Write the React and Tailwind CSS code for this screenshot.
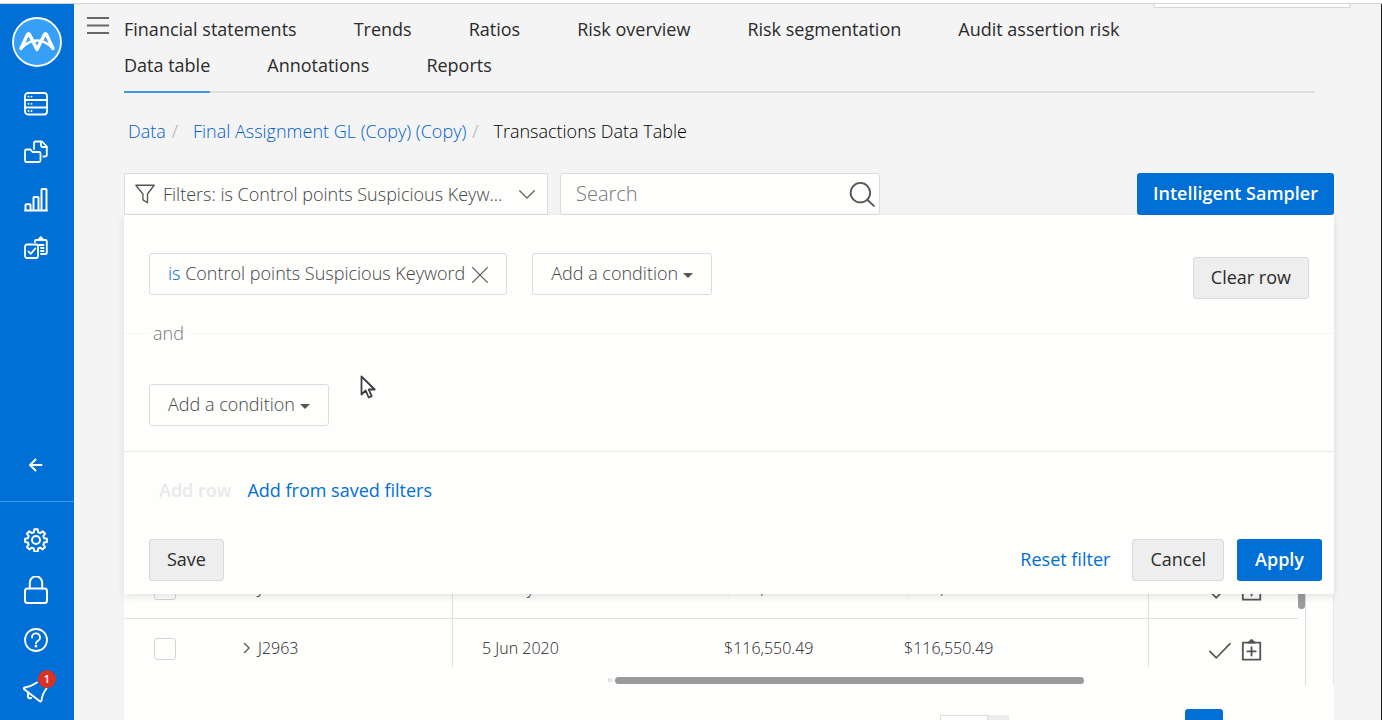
import clsx from 'clsx';

const TABS = [
  'Financial statements',
  'Trends',
  'Ratios',
  'Risk overview',
  'Risk segmentation',
  'Audit assertion risk',
  'Data table',
  'Annotations',
  'Reports',
];

const ROWS = [
  { id: 'J2962', date: '29 May 2020', debit: '$116,550.49', credit: '$116,550.49' },
  { id: 'J2963', date: '5 Jun 2020', debit: '$116,550.49', credit: '$116,550.49' },
];

function Icon({ children, className = 'size-6', strokeWidth = 1.8 }) {
  return (
    <svg
      viewBox="0 0 24 24"
      className={clsx('shrink-0', className)}
      fill="none"
      stroke="currentColor"
      strokeWidth={strokeWidth}
      strokeLinecap="round"
      strokeLinejoin="round"
      aria-hidden="true"
    >
      {children}
    </svg>
  );
}

function Logo() {
  return (
    <svg viewBox="0 0 50 50" className="size-[50px]" aria-hidden="true">
      <circle cx="25" cy="25" r="24" fill="#36a0f8" stroke="#fff" strokeWidth="1.8" />
      <path
        d="M9 31.5 15.5 17.500q1-1.500 2 0L25 32.500 32.500 17.500q1-1.500 2 0L41 31.500"
        fill="none"
        stroke="#fff"
        strokeWidth="3.4"
        strokeLinecap="round"
        strokeLinejoin="round"
      />
      <path d="M9.500 31Q17 23.500 25 23.500T40.500 31" fill="none" stroke="#fff" strokeWidth="2.6" />
    </svg>
  );
}

function ServerIcon() {
  return (
    <Icon>
      <rect x="1" y="1" width="22" height="21.5" rx="3" />
      <path d="M1 8h22M1 15.500h22" />
      <path d="M4.500 4.600h.1M7.500 4.600h.1M4.500 11.800h.1M7.500 11.800h.1M4.500 19h.1M7.500 19h.1" />
    </Icon>
  );
}

function FilesIcon() {
  return (
    <Icon>
      <path d="M1 20.500V11q0-1.500 1.500-1.500h4l2 2.500H15q1.500 0 1.500 1.500v7q0 1.500-1.500 1.500H2.500Q1 22 1 20.500Z" />
      <path d="M10 9V3q0-1.500 1.500-1.500h6.500l4.800 5V15q0 1.500-1.500 1.500h-2" />
      <path d="M17 2v3.500Q17 7 18.500 7h4" />
    </Icon>
  );
}

function BarsIcon() {
  return (
    <Icon strokeWidth={2}>
      <path d="M1 22.500h22M1.500 22V17q0-.800.800-.800h3.400q.800 0 .800.800v5M9.500 22V9.800q0-.800.800-.800h3.400q.800 0 .800.800V22M17.500 22V1.800q0-.800.800-.800h3.400q.800 0 .800.800V22" />
    </Icon>
  );
}

function TasksIcon() {
  return (
    <Icon>
      <rect x="1" y="8.500" width="13" height="13.500" rx="2" />
      <path d="m4.500 15.500 2.200 2.300 4.600-5.300M11 6V5q0-1 1-1h9.500q1.300 0 1.300 1.300v11.400q0 1.300-1.300 1.300H17M15 9h4.500M17 12h2.500M17 15h2.500" />
      <path d="M14 4 16.800 1 19.500 4Z" fill="currentColor" />
    </Icon>
  );
}

function GearIcon() {
  return (
    <Icon strokeWidth={2}>
      <circle cx="12" cy="12" r="4" />
      <path d="M9.800 4.300 10.300 1.300h3.400l.5 3 2 .800 2.500-1.800 2.400 2.400L19.300 8.200l.8 2 2.800.5v3.400l-2.800.5-.8 2 1.800 2.400-2.400 2.400-2.500-1.700-2 .800-.5 3h-3.400l-.5-3-2-.800-2.500 1.700L2.900 19l1.800-2.400-.8-2-2.800-.5v-3.400l2.800-.5.8-2L2.900 5.700l2.400-2.400 2.500 1.800Z" />
    </Icon>
  );
}

function LockIcon() {
  return (
    <Icon className="h-7 w-6" strokeWidth={2}>
      <rect x="1" y="10.500" width="22" height="14.500" rx="2.500" />
      <path d="M5.800 10.500V5a6.200 6.700 0 0 1 12.400 0v5.500" />
    </Icon>
  );
}

function HelpIcon() {
  return (
    <Icon>
      <circle cx="12" cy="12" r="11" />
      <path d="M8 9.500a4 4 0 1 1 6 3.300q-2 1.200-2 2.700" />
      <circle cx="12" cy="18.200" r=".5" fill="currentColor" />
    </Icon>
  );
}

function MegaphoneIcon() {
  return (
    <svg
      viewBox="0 0 28 28"
      className="-ml-0.5 size-7 shrink-0"
      fill="none"
      stroke="currentColor"
      strokeWidth="2"
      strokeLinecap="round"
      strokeLinejoin="round"
      aria-hidden="true"
    >
      <path d="M15 6.500Q9 10.500 3 11.500q-2 .5-.5 2L17.500 25q1.500 1 2-.5.5-6 5-12" />
      <path d="M6 17.500v4q1.500 1 3 .5" />
    </svg>
  );
}

function SideButton({ label, children }) {
  return (
    <button type="button" aria-label={label} className="relative flex size-6 items-center">
      {children}
    </button>
  );
}

function Sidebar() {
  return (
    <aside className="flex w-[74px] shrink-0 flex-col bg-[#006fd6] text-white">
      <a href="#home" aria-label="Home" className="mt-[13px] self-center">
        <Logo />
      </a>
      <nav className="mt-[25px] flex flex-col gap-6 pl-6">
        <SideButton label="Data sources"><ServerIcon /></SideButton>
        <SideButton label="Files"><FilesIcon /></SideButton>
        <SideButton label="Reports"><BarsIcon /></SideButton>
        <SideButton label="Tasks"><TasksIcon /></SideButton>
      </nav>
      <div className="mt-auto pb-6 pl-6">
        <SideButton label="Collapse">
          <Icon strokeWidth={2}>
            <path d="M17.500 12H6.500M11.500 6.500 6 12l5.500 5.500" />
          </Icon>
        </SideButton>
      </div>
      <div className="flex flex-col gap-[26px] border-t border-[#3a9bee] pt-[26px] pb-[18px] pl-6">
        <SideButton label="Settings"><GearIcon /></SideButton>
        <SideButton label="Security"><LockIcon /></SideButton>
        <SideButton label="Help"><HelpIcon /></SideButton>
        <SideButton label="Notifications">
          <MegaphoneIcon />
          <span className="absolute -top-2 left-[14px] flex size-[18px] items-center justify-center rounded-full bg-[#da3125] text-[11px] font-semibold">
            1
          </span>
        </SideButton>
      </div>
    </aside>
  );
}

function Tabs({ active }) {
  return (
    <nav className="mr-[19px] flex flex-wrap border-b-2 border-[#e0e0e1] pb-2">
      {TABS.map((tab) => (
        <a
          key={tab}
          href="#tab"
          className="relative mr-[57px] text-lg leading-9 font-medium text-[#2b2b2b]"
        >
          {tab}
          {tab === active && <span className="absolute inset-x-0 -bottom-[10px] h-0.5 bg-[#3d96e6]" />}
        </a>
      ))}
    </nav>
  );
}

function Breadcrumb() {
  return (
    <div className="mt-5 flex pl-1 text-lg leading-9 font-light">
      <a href="#data" className="text-[#005fcc]">Data</a>
      <span className="mr-[15px] ml-1.5 text-[#aaa]">/</span>
      <a href="#file" className="text-[#005fcc]">Final Assignment GL (Copy) (Copy)</a>
      <span className="mr-[15px] ml-1.5 text-[#aaa]">/</span>
      <span className="text-black">Transactions Data Table</span>
    </div>
  );
}

function Toolbar() {
  return (
    <div className="mt-6 flex items-center">
      <button
        type="button"
        className="flex h-[42px] w-[424px] items-center border border-[#dcdcde] bg-[#fefefd] pr-3 pl-[10px] text-lg font-light text-[#444]"
      >
        <Icon className="size-5 text-[#555]" strokeWidth={1.6}>
          <path d="M1 1.500h22L15 12v10.500L9.500 19v-7Z" />
        </Icon>
        <span className="ml-2 min-w-0 flex-1 truncate text-left">
          Filters: is Control points Suspicious Keyw...
        </span>
        <Icon className="size-4 text-[#666]" strokeWidth={2}>
          <path d="m1 7 11 11L23 7" />
        </Icon>
      </button>
      <label className="ml-3 flex h-[42px] w-80 items-center rounded-[3px] border border-[#dcdcde] bg-[#fefefd] pr-1 pl-[15px]">
        <input
          type="text"
          aria-label="Search"
          placeholder="Search"
          className="min-w-0 flex-1 bg-transparent text-xl font-light text-[#444] outline-none placeholder:text-[#777]"
        />
        <Icon className="size-[26px] text-[#555]" strokeWidth={1.7}>
          <circle cx="10.500" cy="10.800" r="9" />
          <path d="m17 17.500 6 5.500" />
        </Icon>
      </label>
      <button
        type="button"
        className="ml-auto h-[42px] rounded-[3px] bg-[#006fd6] px-4 pb-0.5 text-lg font-semibold text-white"
      >
        Intelligent Sampler
      </button>
    </div>
  );
}

function AddCondition() {
  return (
    <button
      type="button"
      className="flex h-[42px] items-center rounded-[3px] border border-[#dcdcde] px-[18px] pb-0.5 text-lg font-light text-[#444]"
    >
      Add a condition
      <svg viewBox="0 0 10 5" className="mt-1 ml-[5px] h-[5px] w-[10px]" fill="#555" aria-hidden="true">
        <path d="M0 0h10L5 5Z" />
      </svg>
    </button>
  );
}

function GrayButton({ children }) {
  return (
    <button
      type="button"
      className="h-[42px] rounded-[3px] border border-[#d9d9da] bg-[#eeeeef] px-[17px] pb-0.5 text-lg font-medium text-[#2b2b2b]"
    >
      {children}
    </button>
  );
}

function FilterPanel() {
  return (
    <section className="relative z-10 bg-[#fefefd] shadow-[0_3px_8px_rgba(0,0,0,0.1)]">
      <div className="flex items-start pt-[38px] pr-[25px] pl-[25px]">
        <div className="flex h-[42px] items-center rounded-[3px] border border-[#dcdcde] px-[18px] pb-0.5 text-lg font-light text-[#444]">
          <span>
            <span className="text-[#005fcc]">is</span> Control points Suspicious Keyword
          </span>
          <button type="button" aria-label="Remove condition" className="mt-1 ml-[7px] text-[#555]">
            <Icon className="size-4" strokeWidth={1.8}>
              <path d="m1 1 22 22M23 1 1 23" />
            </Icon>
          </button>
        </div>
        <div className="ml-[25px]">
          <AddCondition />
        </div>
        <div className="mt-1 ml-auto">
          <GrayButton>Clear row</GrayButton>
        </div>
      </div>

      <div className="mt-4 flex items-center text-lg leading-9 font-light text-[#777]">
        <span className="h-px w-6 bg-[#f6f6f6]" />
        <span className="px-[5px]">and</span>
        <span className="h-px flex-1 bg-[#f6f6f6]" />
      </div>

      <div className="flex px-[25px] pt-[33px] pb-[25px]">
        <AddCondition />
      </div>

      <div className="border-t border-[#e9e9ea] px-[25px] pt-5 pb-[13px]">
        <div className="flex gap-4 pl-[10px] text-lg leading-9">
          <button type="button" disabled className="font-semibold text-[#e9e9ea]">Add row</button>
          <button type="button" className="font-medium text-[#006fd6]">Add from saved filters</button>
        </div>
        <div className="-mr-[13px] mt-[31px] flex items-center">
          <GrayButton>Save</GrayButton>
          <button type="button" className="mr-[22px] ml-auto pb-0.5 text-lg font-medium text-[#006fd6]">
            Reset filter
          </button>
          <GrayButton>Cancel</GrayButton>
          <button
            type="button"
            className="ml-[13px] h-[42px] rounded-[3px] bg-[#006fd6] px-[18px] pb-0.5 text-lg font-semibold text-white"
          >
            Apply
          </button>
        </div>
      </div>

      <svg
        viewBox="0 0 16 24"
        className="absolute top-[160px] left-[236px] h-6 w-4"
        fill="#fff"
        stroke="#3f3d45"
        strokeWidth="1.8"
        strokeLinejoin="round"
        aria-hidden="true"
      >
        <path d="M1.500 1.500v18l4.200-4 3 7 3-1.300-3-6.700h6Z" />
      </svg>
    </section>
  );
}

function TransactionsTable() {
  return (
    <div className="-mt-[35px] flex bg-[#fefefd]">
      <div className="min-w-0 flex-1">
        <div className="h-[108px] overflow-hidden">
          <table className="w-full table-fixed border-separate border-spacing-0 text-left text-base font-light text-[#222]">
            <colgroup>
              <col className="w-[92px]" />
              <col className="w-[237px]" />
              <col className="w-[242px]" />
              <col className="w-[180px]" />
              <col />
              <col className="w-[150px]" />
            </colgroup>
            <tbody>
              {ROWS.map((row) => (
                <tr key={row.id} className="h-[60px] *:border-b *:border-[#e2e2e3]">
                  <td className="pl-[30px]">
                    <input
                      type="checkbox"
                      aria-label={`Select ${row.id}`}
                      className="block size-[22px] appearance-none rounded-[3px] border border-[#d5d5d8] bg-[#fefefd]"
                    />
                  </td>
                  <td className="border-r pb-0.5 pl-[26px]">
                    <button type="button" className="flex items-center gap-1.5">
                      <Icon className="size-[10px] text-[#666]" strokeWidth={3.6}>
                        <path d="m6 1 11 11L6 23" />
                      </Icon>
                      {row.id}
                    </button>
                  </td>
                  <td className="pb-0.5 pl-[29px]">{row.date}</td>
                  <td className="pb-0.5 pl-[29px]">{row.debit}</td>
                  <td className="pb-0.5 pl-[29px]">{row.credit}</td>
                  <td className="border-l pl-[60px]">
                    <div className="flex items-center gap-[10px] pt-0.5 text-[#555]">
                      <button type="button" aria-label="Approve">
                        <Icon className="size-[22px]" strokeWidth={1.8}>
                          <path d="m1 13.500 7 7L23 5" />
                        </Icon>
                      </button>
                      <button type="button" aria-label="Add to plan">
                        <Icon className="size-[22px]" strokeWidth={2}>
                          <path d="M2 4h19v18.500H2ZM11.500 9v9M7 13.500h9" />
                          <path d="M8 4 11.500 1 15 4Z" fill="currentColor" />
                        </Icon>
                      </button>
                    </div>
                  </td>
                </tr>
              ))}
            </tbody>
          </table>
        </div>
        <div className="flex h-[18px] items-center pt-2 pl-[484px]">
          <span className="h-1 w-1 bg-[#e6e6e6]" />
          <span className="ml-[3px] h-[7px] w-[469px] rounded-full bg-[#9b9b9b]" />
        </div>
      </div>
      <div className="w-2 border-r border-[#dcdcde]">
        <div className="h-[50px] rounded-b-full bg-[#9b9b9b]" />
      </div>
      <div className="w-7 border-r border-[#e6e6e8]" />
    </div>
  );
}

function Pagination() {
  return (
    <div className="flex flex-1 items-start bg-[#fefefd] pt-6 pr-[111px]">
      <div className="mt-1.5 ml-auto flex h-8">
        <input type="text" aria-label="Page" className="w-12 border border-[#dcdcde] bg-[#fefefd]" />
        <button type="button" aria-label="Go to page" className="w-[21px] bg-[#ececee]" />
      </div>
      <button type="button" aria-label="Next page" className="ml-44 h-9 w-[38px] rounded-[3px] bg-[#006fd6]" />
    </div>
  );
}

export default function App() {
  return (
    <div className="flex h-screen flex-col overflow-hidden bg-[#f4f4f5] font-['Open_Sans',sans-serif]">
      <div className="h-1 shrink-0 border-b border-[#d5d5d9] bg-[#fefefd]" />
      <div className="flex min-h-0 flex-1">
        <Sidebar />
        <main className="relative flex min-w-0 flex-1 border-r border-[#1b1b1b]">
          <div className="absolute top-0 right-[30px] h-1 w-[198px] rounded-b-[3px] border border-t-0 border-[#d5d5d9] bg-[#fefefd]" />
          <div className="w-[50px] shrink-0 pt-3 pl-3">
            <button type="button" aria-label="Menu" className="block text-[#666]">
              <svg viewBox="0 0 24 20" className="h-5 w-6" stroke="currentColor" strokeWidth="1.8" aria-hidden="true">
                <path d="M1 2h22M1 9.500h22M1 17h22" />
              </svg>
            </button>
          </div>
          <div className="mr-[47px] flex min-w-0 flex-1 flex-col pt-[7px]">
            <Tabs active="Data table" />
            <Breadcrumb />
            <Toolbar />
            <FilterPanel />
            <TransactionsTable />
            <Pagination />
          </div>
        </main>
      </div>
    </div>
  );
}
